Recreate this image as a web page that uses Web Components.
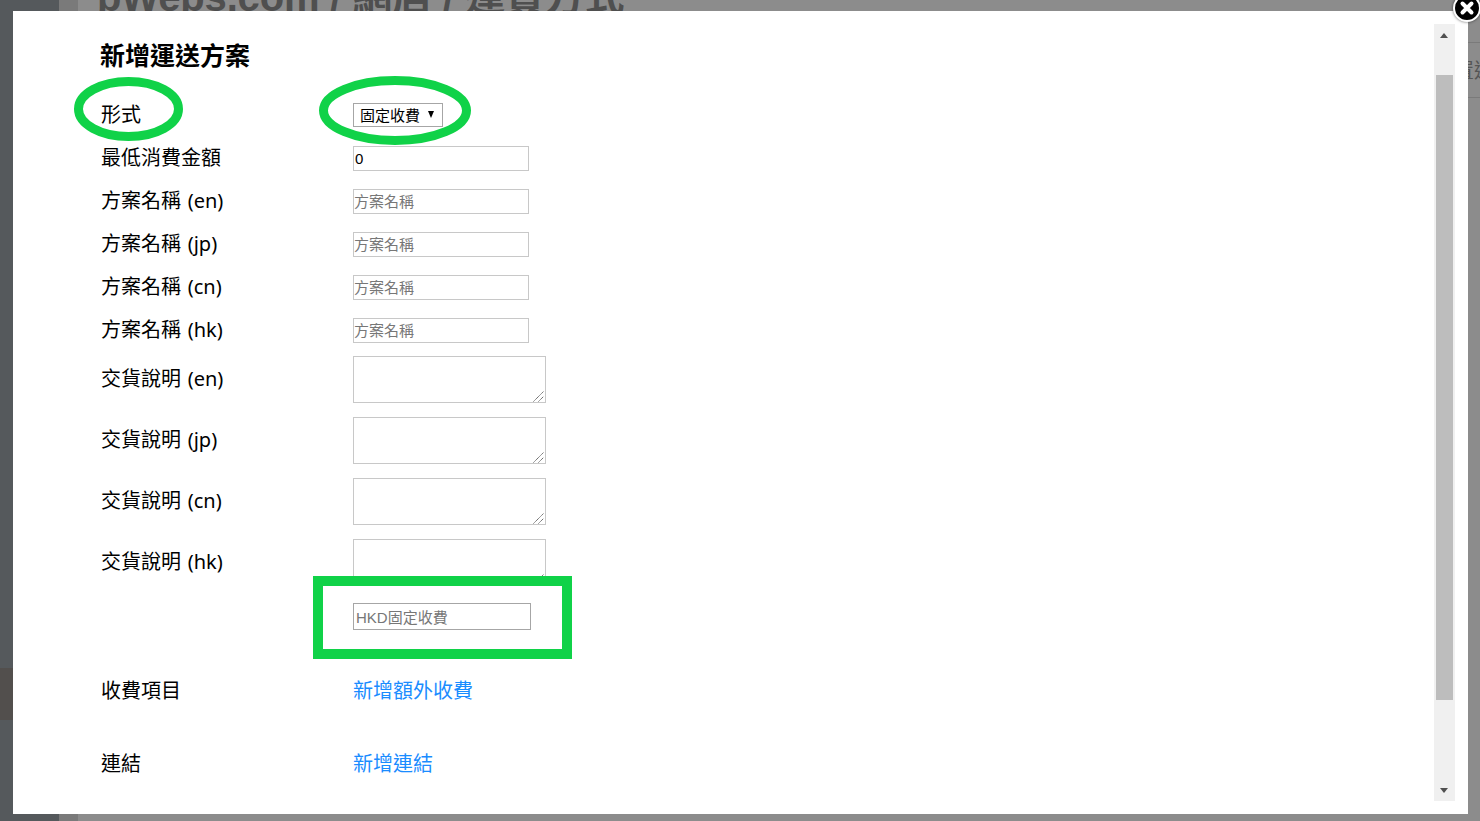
<!DOCTYPE html>
<html lang="zh-Hant"><head><meta charset="utf-8">
<style>
html,body{margin:0;height:821px;overflow:hidden;background:#8c8c8c}
body{font-family:"Liberation Sans","Noto Sans CJK TC",sans-serif}
</style></head><body>
<page-backdrop></page-backdrop>
<ship-modal>
  <h2 slot="title">新增運送方案</h2>
  <form-row label="形式" h="43"><pick-box>固定收費</pick-box></form-row>
  <form-row label="最低消費金額" h="43"><text-box value="0"></text-box></form-row>
  <form-row label="方案名稱 (en)" h="43"><text-box ph="方案名稱"></text-box></form-row>
  <form-row label="方案名稱 (jp)" h="43"><text-box ph="方案名稱"></text-box></form-row>
  <form-row label="方案名稱 (cn)" h="43"><text-box ph="方案名稱"></text-box></form-row>
  <form-row label="方案名稱 (hk)" h="42"><text-box ph="方案名稱"></text-box></form-row>
  <form-row label="交貨說明 (en)" h="61" tall><area-box></area-box></form-row>
  <form-row label="交貨說明 (jp)" h="61" tall><area-box></area-box></form-row>
  <form-row label="交貨說明 (cn)" h="61" tall><area-box></area-box></form-row>
  <form-row label="交貨說明 (hk)" h="61" tall><area-box></area-box></form-row>
  <form-row label="" h="75"><fee-box ph="HKD固定收費"></fee-box></form-row>
  <form-row label="收費項目" h="73"><a-link>新增額外收費</a-link></form-row>
  <form-row label="連結" h="73"><a-link>新增連結</a-link></form-row>
</ship-modal>
<script>
function def(name, css, html, init){
  customElements.define(name, class extends HTMLElement{
    constructor(){super();const r=this.attachShadow({mode:'open'});
      r.innerHTML='<style>'+css+'</style>'+html;}
    connectedCallback(){ if(init)init(this,this.shadowRoot); }
  });
}
const FONT='"Liberation Sans","Noto Sans CJK TC",sans-serif';
const LABEL='"Noto Sans","Noto Sans CJK TC",sans-serif';

def('page-backdrop',`
  :host{position:absolute;inset:0;display:block;overflow:hidden;background:#8c8c8c}
  .left{position:absolute;left:0;top:0;bottom:0;width:59px;background:#55595c}
  .band{position:absolute;left:0;top:668px;width:13px;height:52px;background:#524f4d}
  .lt{position:absolute;left:59px;top:0;bottom:0;width:19px;background:#7a7a7a}
  .head{position:absolute;left:97px;top:-26px;font:bold 40px/46px ${FONT};letter-spacing:-.15px;color:#4f4f4f;white-space:nowrap}
  .line{position:absolute;left:1468px;right:0;height:1px;background:#7a7a7a}
  .peek{position:absolute;left:1454px;top:59px;font:20px/24px ${FONT};color:#555;white-space:nowrap}
`,`<div class="left"></div><div class="band"></div><div class="lt"></div>
  <div class="head">bWebs.com / 網店 / 運費方式</div>
  <div class="line" style="top:42px"></div><div class="line" style="top:97px"></div>
  <div class="peek">置運</div>`);

def('ship-modal',`
  :host{position:absolute;left:13px;top:11px;width:1455px;height:803px;display:block;background:#fff}
  .body{padding:28px 0 0 87px;display:flex;flex-direction:column}
  ::slotted(h2){margin:0 0 26px 0;font:bold 25px/34px ${FONT};color:#000}
  .bar{position:absolute;left:1421px;top:13px;width:21px;height:777px;background:#f0f0f0}
  .thumb{position:absolute;left:2px;top:51px;width:17px;height:625px;background:#bdbdbd}
  .up,.down{position:absolute;left:6px;width:0;height:0;border-left:4.5px solid transparent;border-right:4.5px solid transparent}
  .up{top:9px;border-bottom:5px solid #505050}
  .down{bottom:8px;border-top:5px solid #505050}
  .close{position:absolute;left:1440px;top:-17px;width:24px;height:24px;border-radius:50%;background:#000;border:2px solid #fff;box-shadow:0 0 3px rgba(0,0,0,.6)}
  .close svg{display:block;width:24px;height:24px}
  .mk{position:absolute;left:0;top:0;pointer-events:none}
`,`<div class="body"><slot name="title"></slot><slot></slot></div>
  <div class="bar"><div class="up"></div><div class="thumb"></div><div class="down"></div></div>
  <div class="close"><svg viewBox="0 0 24 24"><path d="M7.500 7.500l9 9M16.500 7.500l-9 9" stroke="#fff" stroke-width="4" stroke-linecap="round" fill="none"/></svg></div>
  <svg class="mk" width="1455" height="803" viewBox="0 0 1455 803">
    <ellipse cx="115.500" cy="98" rx="50" ry="27.500" fill="none" stroke="#10d248" stroke-width="9"/>
    <ellipse cx="382" cy="99.500" rx="71.500" ry="30" fill="none" stroke="#10d248" stroke-width="9"/>
  </svg>`);

def('form-row',`
  :host{display:grid;grid-template-columns:253px 1fr;box-sizing:border-box;font:20px/23px ${LABEL};color:#000}
  .l{padding:4px 0 0 1px;white-space:nowrap;word-spacing:1.5px}
  :host([tall]) .l{padding-top:11px}
`,`<div class="l"></div><div class="c"><slot></slot></div>`,(h,r)=>{
  h.style.height=h.getAttribute('h')+'px';
  r.querySelector('.l').textContent=h.getAttribute('label');
});

def('pick-box',`
  :host{display:inline-flex;align-items:center;box-sizing:border-box;width:90px;height:24px;border:1px solid #a6a6a6;padding:0 0 1px 6px;font:15px ${FONT};color:#000;background:#fff;margin-top:4px;position:relative}
  i{position:absolute;right:8px;top:7px;width:0;height:0;border-left:3.5px solid transparent;border-right:3.5px solid transparent;border-top:7px solid #000}
`,`<slot></slot><i></i>`);

def('text-box',`
  :host{display:block;margin-top:4px}
  input{display:block;box-sizing:border-box;width:176px;height:25px;border:1px solid #c8c8c8;padding:0 1px 0 0;font:15px ${FONT};color:#000;background:#fff;outline:none;border-radius:0}
  input[value]{padding-left:1px}
  input::placeholder{color:#777;opacity:1}
`,`<input>`,(h,r)=>{const i=r.querySelector('input');
  if(h.hasAttribute('value'))i.setAttribute('value',h.getAttribute('value'));
  if(h.hasAttribute('ph'))i.placeholder=h.getAttribute('ph');});

def('area-box',`
  :host{display:block;position:relative;width:193px;height:47px}
  textarea{display:block;box-sizing:border-box;width:193px;height:47px;border:1px solid #c8c8c8;padding:2px;margin:0;background:#fff;outline:none;border-radius:0;resize:none;font:14px ${FONT}}
  svg{position:absolute;right:2px;bottom:1px;display:block}
`,`<textarea></textarea><svg width="11" height="11" viewBox="0 0 11 11"><path d="M0.500 10.500L10.500 .5M5.500 10.500l5-5" stroke="#555" stroke-width="1" stroke-dasharray="1.200 .5" fill="none"/></svg>`);

def('fee-box',`
  :host{display:block;position:relative;height:100%}
  .frame{position:absolute;left:-40px;top:-24px;box-sizing:border-box;width:259px;height:83px;border:10px solid #10d248;background:#fff;padding:17px 0 0 30px}
  input{display:block;box-sizing:border-box;width:178px;height:27px;border:1px solid #a6a6a6;padding:1px 2px 0;font:15px ${FONT};color:#000;background:#fff;outline:none;border-radius:0}
  input::placeholder{color:#777;opacity:1}
`,`<div class="frame"><input></div>`,(h,r)=>{r.querySelector('input').placeholder=h.getAttribute('ph');});

def('a-link',`
  :host{display:inline-block;margin-top:4px;font:20px/23px ${LABEL};color:#1a8cff;cursor:pointer}
`,`<slot></slot>`);
</script>
</body></html>
